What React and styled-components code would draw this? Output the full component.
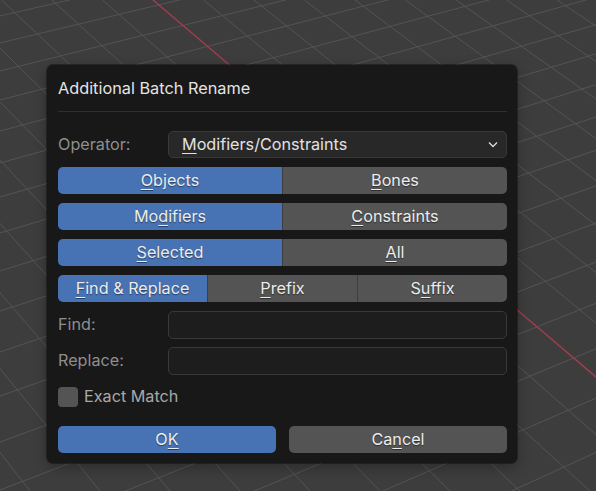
import React from "react";
import styled, { createGlobalStyle } from "styled-components";

const GlobalStyle = createGlobalStyle`
  html, body {
    margin: 0;
    padding: 0;
    background: #3d3d3d;
  }
  * {
    box-sizing: border-box;
  }
`;

const Viewport = styled.div`
  position: relative;
  width: 596px;
  height: 491px;
  overflow: hidden;
  padding: 65px 0 0 47px;
  font-family: Inter, "Noto Sans", sans-serif;
`;

const Backdrop = styled.svg`
  position: absolute;
  left: 0;
  top: 0;
  width: 596px;
  height: 491px;
`;

const Dialog = styled.div`
  position: relative;
  width: 470px;
  height: 398px;
  padding: 14px 10px 10px 11px;
  background: #181818;
  border-radius: 6px;
  box-shadow: 0 0 0 1px rgba(0, 0, 0, 0.35), 0 4px 14px rgba(0, 0, 0, 0.3);
  display: flex;
  flex-direction: column;
`;

const Title = styled.div`
  height: 20px;
  line-height: 19px;
  font-size: 16.3px;
  color: #e4e4e4;
`;

const Divider = styled.div`
  height: 1px;
  margin: 12px 0 19px;
  background: #2f2f2f;
`;

const Rows = styled.div`
  display: flex;
  flex-direction: column;
  gap: 9px;
`;

const FieldRow = styled.div`
  display: grid;
  grid-template-columns: 110px 1fr;
  align-items: center;
  height: 27px;
`;

const Label = styled.div`
  font-size: 16.2px;
  padding-bottom: 2px;
  color: ${(p) => (p.$bright ? "#a9a9a9" : "#8e8e8e")};
`;

const Dropdown = styled.div`
  height: 27px;
  display: flex;
  align-items: center;
  justify-content: space-between;
  padding: 0 8px 1px 13px;
  background: #282828;
  border: 1px solid #393939;
  border-radius: 5px;
  font-size: 16.2px;
  color: #e2e2e2;
`;

const TextInput = styled.div`
  height: 28px;
  background: #1d1d1d;
  border: 1px solid #393939;
  border-radius: 5px;
`;

const Segmented = styled.div`
  display: flex;
  height: 27px;
  border-radius: 5px;
  overflow: hidden;
`;

const Segment = styled.div`
  flex: 1;
  display: flex;
  align-items: center;
  justify-content: center;
  padding-bottom: 2px;
  font-size: 16.2px;
  color: #ececec;
  text-shadow: 0 1px 1px rgba(0, 0, 0, 0.45);
  background: ${(p) => (p.$active ? "#4772b3" : "#545454")};
  & + & {
    border-left: 1px solid ${(p) => (p.$active ? "#4772b3" : "#3e3e3e")};
  }
`;

const Key = styled.span`
  text-decoration: underline;
  text-decoration-thickness: 1px;
  text-underline-offset: 3px;
`;

const CheckRow = styled.div`
  display: flex;
  align-items: center;
  gap: 6px;
  height: 27px;
`;

const CheckBox = styled.div`
  width: 20px;
  height: 20px;
  border-radius: 4px;
  background: #545454;
`;

const Footer = styled.div`
  display: flex;
  gap: 13px;
  margin-top: 16px;
`;

const Button = styled.div`
  flex: 1;
  height: 27px;
  display: flex;
  align-items: center;
  justify-content: center;
  padding-bottom: 2px;
  border-radius: 5px;
  font-size: 16.2px;
  color: #ececec;
  text-shadow: 0 1px 1px rgba(0, 0, 0, 0.45);
  background: ${(p) => (p.$primary ? "#4772b3" : "#545454")};
`;

// perspective floor grid behind the popup
const VP_A = { x: 3137, y: -710 };
const depthLines = [16, 43, 71, 100, 131, 163, 197, 233, 271, 311, 352, 396, 442, 490, 541, 597, 658, 725, 800];

function GridBackdrop() {
  const across = depthLines.map((y0) => {
    const slope = (VP_A.y - y0) / VP_A.x;
    return { x1: -5, y1: y0 - 5 * slope, x2: 600, y2: y0 + 600 * slope };
  });
  const along = [];
  for (let k = -10; k <= 8; k++) {
    if (k === 0) continue;
    along.push({ x1: 153 + 50.5 * k, y1: 0, x2: 730 + 70 * k, y2: 491 });
  }
  return (
    <Backdrop viewBox="0 0 596 491">
      <rect width="596" height="491" fill="#3d3d3d" />
      {across.map((l, i) => (
        <line key={"a" + i} {...l} stroke="#545454" strokeWidth="1" />
      ))}
      {along.map((l, i) => (
        <line key={"b" + i} {...l} stroke="#545454" strokeWidth="1" />
      ))}
      <line x1="153" y1="0" x2="730" y2="491" stroke="#a33d4d" strokeWidth="1.4" />
    </Backdrop>
  );
}

function Chevron() {
  return (
    <svg width="10" height="7" viewBox="0 0 10 7">
      <polyline points="1,1.5 5,5.5 9,1.5" fill="none" stroke="#d8d8d8" strokeWidth="1.4" />
    </svg>
  );
}

export default function App() {
  return (
    <>
      <GlobalStyle />
      <Viewport>
        <GridBackdrop />
        <Dialog>
          <Title>Additional Batch Rename</Title>
          <Divider />
          <Rows>
            <FieldRow>
              <Label>Operator:</Label>
              <Dropdown>
                <span>
                  <Key>M</Key>odifiers/Constraints
                </span>
                <Chevron />
              </Dropdown>
            </FieldRow>
            <Segmented>
              <Segment $active>
                <span>
                  <Key>O</Key>bjects
                </span>
              </Segment>
              <Segment>
                <span>
                  <Key>B</Key>ones
                </span>
              </Segment>
            </Segmented>
            <Segmented>
              <Segment $active>
                <span>
                  Mo<Key>d</Key>ifiers
                </span>
              </Segment>
              <Segment>
                <span>
                  <Key>C</Key>onstraints
                </span>
              </Segment>
            </Segmented>
            <Segmented>
              <Segment $active>
                <span>
                  <Key>S</Key>elected
                </span>
              </Segment>
              <Segment>
                <span>
                  <Key>A</Key>ll
                </span>
              </Segment>
            </Segmented>
            <Segmented>
              <Segment $active>
                <span>
                  <Key>F</Key>ind &amp; Replace
                </span>
              </Segment>
              <Segment>
                <span>
                  <Key>P</Key>refix
                </span>
              </Segment>
              <Segment>
                <span>
                  S<Key>u</Key>ffix
                </span>
              </Segment>
            </Segmented>
            <FieldRow>
              <Label>Find:</Label>
              <TextInput />
            </FieldRow>
            <FieldRow>
              <Label>Replace:</Label>
              <TextInput />
            </FieldRow>
            <CheckRow>
              <CheckBox />
              <Label $bright>Exact Match</Label>
            </CheckRow>
          </Rows>
          <Footer>
            <Button $primary>
              <span>
                O<Key>K</Key>
              </span>
            </Button>
            <Button>
              <span>
                Ca<Key>n</Key>cel
              </span>
            </Button>
          </Footer>
        </Dialog>
      </Viewport>
    </>
  );
}
